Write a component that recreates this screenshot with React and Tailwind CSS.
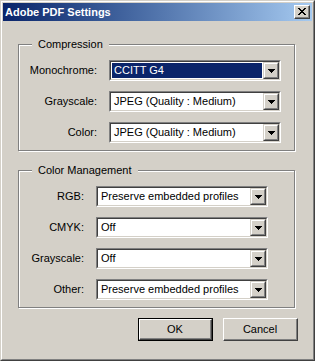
import React from 'react';

const font = { fontFamily: '"Liberation Sans", Arial, sans-serif' };

function Combo({ value, selected }) {
    return (
        <div className="w-[172px] h-[21px] border-t border-l border-t-[#808080] border-l-[#808080] border-r border-b border-r-white border-b-white">
            <div className="h-full flex bg-white border-t border-l border-t-[#404040] border-l-[#404040] border-r border-b border-r-[#d4d0c8] border-b-[#d4d0c8]">
                <div className="flex-1 p-px">
                    <div className={`h-full pl-[2px] text-[11px] leading-[15px] whitespace-nowrap ${selected ? 'bg-[#0a246a] text-white' : 'text-black'}`}>
                        {value}
                    </div>
                </div>
                <div className="w-[16px] h-full bg-[#d4d0c8] border-t border-l border-t-[#d4d0c8] border-l-[#d4d0c8] border-r border-b border-r-[#404040] border-b-[#404040]">
                    <div className="h-full flex items-center justify-center border-t border-l border-t-white border-l-white border-r border-b border-r-[#808080] border-b-[#808080]">
                        <svg width="7" height="4" viewBox="0 0 7 4">
                            <path d="M0 0h7v1H6v1H5v1H4v1H3V3H2V2H1V1H0z" fill="#000" />
                        </svg>
                    </div>
                </div>
            </div>
        </div>
    );
}

function GroupBox({ title, rows, labelWidth, className }) {
    return (
        <div className={`relative ml-[15px] w-[277px] border border-[#808080] shadow-[inset_1px_1px_0_#fff,1px_1px_0_#fff] pt-[15px] pb-[7px] ${className}`}>
            <span className="absolute -top-[7px] left-[13px] px-[6px] bg-[#d4d0c8] text-[11px] leading-[13px] text-black">
                {title}
            </span>
            <div className="flex flex-col gap-[10px]">
                {rows.map(r => (
                    <div key={r.label} className="flex items-center">
                        <div className="text-right text-[11px] text-black pr-[12px]" style={{ width: labelWidth }}>
                            {r.label}
                        </div>
                        <Combo value={r.value} selected={r.selected} />
                    </div>
                ))}
            </div>
        </div>
    );
}

function Button({ children, isDefault }) {
    const inner = (
        <div className="w-full h-full border-t border-l border-t-white border-l-white border-r border-b border-r-[#404040] border-b-[#404040]">
            <div className="w-full h-full flex items-center justify-center text-[11px] text-black border-r border-b border-r-[#808080] border-b-[#808080]">
                {children}
            </div>
        </div>
    );
    return isDefault ? (
        <div className="w-[75px] h-[23px] border border-black">{inner}</div>
    ) : (
        <div className="w-[75px] h-[23px]">{inner}</div>
    );
}

export default function App() {
    return (
        <div style={font} className="w-[315px] h-[361px] bg-[#d4d0c8] border-t border-l border-t-[#d4d0c8] border-l-[#d4d0c8] border-r border-b border-r-[#404040] border-b-[#404040]">
            <div className="h-full flex flex-col p-px border-t border-l border-t-white border-l-white border-r border-b border-r-[#808080] border-b-[#808080]">
                {/* Title bar */}
                <div className="h-[18px] flex items-center justify-between pl-[2px] pr-[2px] bg-linear-to-r from-[#0a246a] to-[#a6caf0]">
                    <span className="text-white font-bold text-[11px] leading-[18px]">Adobe PDF Settings</span>
                    <div className="w-[16px] h-[14px] bg-[#d4d0c8] border-t border-l border-t-white border-l-white border-r border-b border-r-[#404040] border-b-[#404040]">
                        <div className="w-full h-full flex items-center justify-center border-r border-b border-r-[#808080] border-b-[#808080]">
                            <svg width="8" height="7" viewBox="0 0 8 7">
                                <path d="M0 0h2v1h1v1h2V1h1V0h2v1H7v1H6v1H5v1h1v1h1v1h1v1H6V6H5V5H3v1H2v1H0V6h1V5h1V4h1V3H2V2H1V1H0z" fill="#000" />
                            </svg>
                        </div>
                    </div>
                </div>

                <GroupBox
                    className="mt-[23px]"
                    title="Compression"
                    labelWidth={90}
                    rows={[
                        { label: 'Monochrome:', value: 'CCITT G4', selected: true },
                        { label: 'Grayscale:', value: 'JPEG (Quality : Medium)' },
                        { label: 'Color:', value: 'JPEG (Quality : Medium)' },
                    ]}
                />

                <GroupBox
                    className="mt-[19px]"
                    title="Color Management"
                    labelWidth={77}
                    rows={[
                        { label: 'RGB:', value: 'Preserve embedded profiles' },
                        { label: 'CMYK:', value: 'Off' },
                        { label: 'Grayscale:', value: 'Off' },
                        { label: 'Other:', value: 'Preserve embedded profiles' },
                    ]}
                />

                <div className="mt-[10px] flex justify-end gap-[10px] pr-[14px]">
                    <Button isDefault>OK</Button>
                    <Button>Cancel</Button>
                </div>
            </div>
        </div>
    );
}
